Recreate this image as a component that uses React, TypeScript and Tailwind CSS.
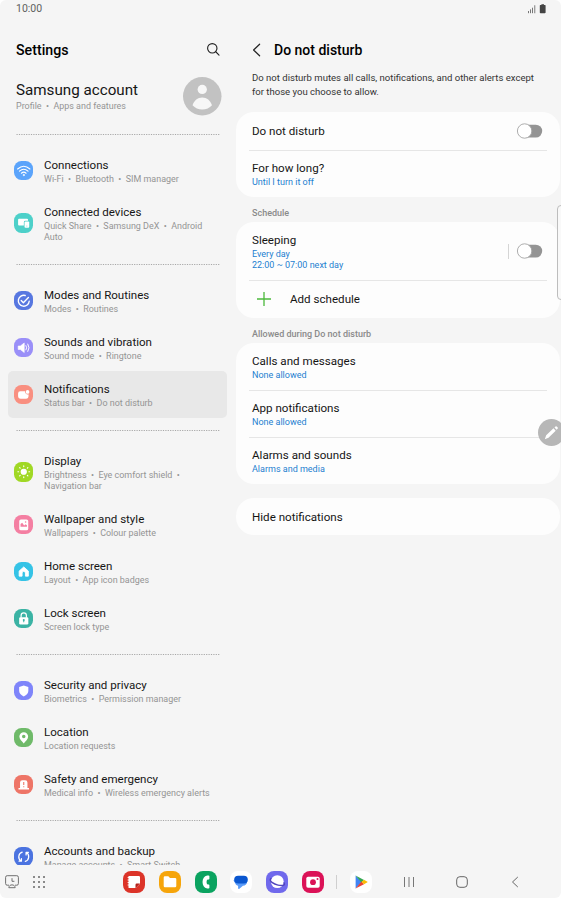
import type { ReactNode } from 'react';
import { clsx } from 'clsx';

interface MenuItem {
  title: string;
  lines: string[];
  color: string;
  icon: ReactNode;
  selected?: boolean;
}

const menuGroups: MenuItem[][] = [
  [
    {
      title: 'Connections',
      lines: ['Wi-Fi  •  Bluetooth  •  SIM manager'],
      color: 'bg-[#5ba4fb]',
      icon: (
        <g fill="none" stroke="#fff" strokeWidth="1.2" strokeLinecap="round">
          <path d="M3.7 8.2Q10 2.6 16.3 8.2" />
          <path d="M5.6 10.4Q10 6.5 14.4 10.4" />
          <path d="M7.6 12.5Q10 10.5 12.4 12.5" />
          <circle cx="10" cy="14.4" r=".7" fill="#fff" strokeWidth=".6" />
        </g>
      ),
    },
    {
      title: 'Connected devices',
      lines: ['Quick Share  •  Samsung DeX  •  Android', 'Auto'],
      color: 'bg-[#4dd0c9]',
      icon: (
        <g fill="#fff">
          <path d="M5.2 5.8h8.2a1 1 0 0 1 1 1v1.1h-2.8a1.5 1.5 0 0 0-1.5 1.5v3.3H5.2a1 1 0 0 1-1-1V6.8a1 1 0 0 1 1-1z" />
          <rect x="10.8" y="8.7" width="4.8" height="6.3" rx="1" />
          <circle cx="13.2" cy="13.3" r=".5" fill="#4dd0c9" />
        </g>
      ),
    },
  ],
  [
    {
      title: 'Modes and Routines',
      lines: ['Modes  •  Routines'],
      color: 'bg-[#5777e0]',
      icon: (
        <g fill="none" stroke="#fff" strokeWidth="1.4" strokeLinecap="round" strokeLinejoin="round">
          <path d="M11.5 4.6A5.6 5.6 0 1 0 15.6 10.5" />
          <path d="M7.4 9.8l2.2 2.2 5.2-5.4" />
        </g>
      ),
    },
    {
      title: 'Sounds and vibration',
      lines: ['Sound mode  •  Ringtone'],
      color: 'bg-[#9a8ff8]',
      icon: (
        <g>
          <path d="M4.3 8.2h2.2l4-3.1v9.8l-4-3.1H4.3z" fill="#fff" stroke="#fff" strokeWidth=".6" strokeLinejoin="round" />
          <path d="M12.3 7.8q1.5 2.2 0 4.4M14.2 6.2q2.6 3.8 0 7.6" fill="none" stroke="#fff" strokeLinecap="round" />
        </g>
      ),
    },
    {
      title: 'Notifications',
      lines: ['Status bar  •  Do not disturb'],
      color: 'bg-[#f98f80]',
      selected: true,
      icon: (
        <g fill="#fff">
          <path d="M6.4 6.5h4.9a2.7 2.7 0 0 0 3.6 3v1.9a2.6 2.6 0 0 1-2.6 2.6H6.8a2.6 2.6 0 0 1-2.6-2.6V8.8a2.3 2.3 0 0 1 2.2-2.3z" />
          <circle cx="13.9" cy="7.1" r="1.9" />
        </g>
      ),
    },
  ],
  [
    {
      title: 'Display',
      lines: ['Brightness  •  Eye comfort shield  •', 'Navigation bar'],
      color: 'bg-[#a0d825]',
      icon: (
        <g stroke="#fff" strokeWidth="1.2" strokeLinecap="round">
          <circle cx="10" cy="10" r="2.6" fill="#fff" />
          <path d="M10 4v.7M10 15.3v.7M4 10h.7M15.3 10h.7M5.8 5.8l.5.5M13.7 13.7l.5.5M14.2 5.8l-.5.5M6.3 13.7l-.5.5" />
        </g>
      ),
    },
    {
      title: 'Wallpaper and style',
      lines: ['Wallpapers  •  Colour palette'],
      color: 'bg-[#f47fa2]',
      icon: (
        <g>
          <rect x="5.4" y="4.5" width="9.2" height="11.2" rx="1.7" fill="#fff" />
          <path d="M6.7 12V9.3l1.7-1.3 2 2.7 1.5-1.3 1.4 1.2V12z" fill="#f47fa2" />
          <circle cx="11.9" cy="7.2" r=".8" fill="#f47fa2" />
        </g>
      ),
    },
    {
      title: 'Home screen',
      lines: ['Layout  •  App icon badges'],
      color: 'bg-[#35c3e6]',
      icon: (
        <path
          d="M10 5.1l4.7 4.2v5.2h-3v-3.2a1.7 1.7 0 0 0-3.4 0v3.2h-3V9.3z"
          fill="#fff" stroke="#fff" strokeWidth=".9" strokeLinejoin="round"
        />
      ),
    },
    {
      title: 'Lock screen',
      lines: ['Screen lock type'],
      color: 'bg-[#3bb3a4]',
      icon: (
        <g>
          <path d="M7.3 9V6.7a2.7 2.7 0 0 1 5.4 0V9" fill="none" stroke="#fff" strokeWidth="1.2" />
          <rect x="5.3" y="8.5" width="9.4" height="7.3" rx="1.3" fill="#fff" />
          <path d="M10 11v2.6" stroke="#3bb3a4" strokeWidth="1" />
          <circle cx="10" cy="11.2" r="1" fill="#3bb3a4" />
        </g>
      ),
    },
  ],
  [
    {
      title: 'Security and privacy',
      lines: ['Biometrics  •  Permission manager'],
      color: 'bg-[#7f85fa]',
      icon: <path d="M10 4.5l4.7 1.6v4c0 2.5-1.7 4.3-4.7 5.7-3-1.4-4.7-3.2-4.7-5.7v-4z" fill="#fff" />,
    },
    {
      title: 'Location',
      lines: ['Location requests'],
      color: 'bg-[#6fba69]',
      icon: (
        <path
          d="M10 4.3a4.5 4.5 0 0 0-4.5 4.5c0 3.1 2.7 5 4.5 7 1.8-2 4.5-3.9 4.5-7A4.5 4.5 0 0 0 10 4.3zm0 2.7a1.8 1.8 0 1 1 0 3.6A1.8 1.8 0 0 1 10 7z"
          fill="#fff" fillRule="evenodd"
        />
      ),
    },
    {
      title: 'Safety and emergency',
      lines: ['Medical info  •  Wireless emergency alerts'],
      color: 'bg-[#ee7567]',
      icon: (
        <g>
          <path d="M6.2 13.4V7.7a2.4 2.4 0 0 1 2.4-2.4h2.8a2.4 2.4 0 0 1 2.4 2.4v5.7h1.6v1.4H4.6v-1.4z" fill="#fff" />
          <path d="M10 7.3v3M10 11.5v1" stroke="#ee7567" strokeWidth="1.1" />
        </g>
      ),
    },
  ],
  [
    {
      title: 'Accounts and backup',
      lines: ['Manage accounts  •  Smart Switch'],
      color: 'bg-[#4b73e0]',
      icon: (
        <g fill="none" stroke="#fff" strokeWidth="1.3" strokeLinecap="round" strokeLinejoin="round">
          <path d="M8.4 5.3C4.2 6.6 3.8 12.2 7.2 14.3M7.6 11.9v2.6H5.2" />
          <path d="M11.6 14.7c4.2-1.3 4.6-6.9 1.2-9M12.4 8.1V5.5h2.4" />
        </g>
      ),
    },
  ],
];

function DottedLine() {
  return (
    <div className="flex h-[25px] items-center px-[16px]">
      <svg className="h-px w-[204px]">
        <line x1="0.5" y1="0.5" x2="204" y2="0.5" stroke="#a8a8a8" strokeWidth="1" strokeDasharray="1.2 1.2" />
      </svg>
    </div>
  );
}

function MenuRow({ item }: { item: MenuItem }) {
  return (
    <div
      className={clsx(
        'ml-[8px] flex w-[219px] shrink-0 items-center rounded-[5px] pl-[5.5px]',
        item.lines.length > 1 ? 'h-[58px]' : 'h-[47px]',
        item.selected && 'bg-[#e8e8e8]'
      )}
    >
      <div className={clsx('h-[19.5px] w-[19.5px] shrink-0 rounded-[7.5px]', item.color)}>
        <svg viewBox="0 0 20 20" className="h-full w-full">{item.icon}</svg>
      </div>
      <div className="ml-[11px] whitespace-pre">
        <div className="text-[11.55px] leading-[17px] text-[#151515]">{item.title}</div>
        {item.lines.map((line) => (
          <div key={line} className="text-[8.95px] leading-[10.5px] text-[#949494]">{line}</div>
        ))}
      </div>
    </div>
  );
}

function Sidebar() {
  return (
    <div className="flex w-[236px] shrink-0 flex-col overflow-hidden">
      <div className="flex h-[33px] shrink-0 items-center justify-between pr-[15px] pl-[16px]">
        <h1 className="pt-[2px] text-[14.2px] leading-none font-medium text-black">Settings</h1>
        <svg viewBox="0 0 16 16" className="h-[15px] w-[15px]" fill="none" stroke="#222" strokeWidth="1.2" strokeLinecap="round">
          <circle cx="6.7" cy="6.7" r="5" />
          <path d="M10.4 10.4l3.5 3.5" />
        </svg>
      </div>
      <div className="flex h-[56px] shrink-0 items-center justify-between pt-[5px] pr-[14.5px] pl-[16px]">
        <div className="pt-[1px] whitespace-pre">
          <div className="text-[15.2px] leading-[19px] text-[#151515]">Samsung account</div>
          <div className="text-[8.95px] leading-[13px] text-[#949494]">Profile  •  Apps and features</div>
        </div>
        <svg viewBox="0 0 38 38" className="h-[38.5px] w-[38.5px]">
          <circle cx="19" cy="19" r="19" fill="#c2c2c2" />
          <circle cx="19" cy="12.3" r="4.6" fill="#f7f7f7" />
          <path d="M9.4 27.8c1.7-4.6 5-7.5 9.6-7.5s7.9 2.9 9.6 7.5c-2.4 2.7-5.7 4.3-9.6 4.3s-7.2-1.6-9.6-4.3z" fill="#f7f7f7" />
        </svg>
      </div>
      {menuGroups.map((group) => (
        <div key={group[0].title} className="shrink-0">
          <DottedLine />
          {group.map((item) => (
            <MenuRow key={item.title} item={item} />
          ))}
        </div>
      ))}
    </div>
  );
}

function Toggle() {
  return (
    <svg viewBox="0 0 27 16" className="h-[16px] w-[27px] shrink-0">
      <rect x="4" y="1.7" width="22.2" height="12.8" rx="6.4" fill="#949494" />
      <circle cx="8.6" cy="8" r="7.2" fill="#fff" stroke="#a5a5a5" strokeWidth=".9" />
    </svg>
  );
}

function Card({ className, children }: { className: string; children: ReactNode }) {
  return <div className={clsx('w-[324px] shrink-0 rounded-[18px] bg-[#fdfdfd]', className)}>{children}</div>;
}

function Divider() {
  return <div className="mx-[13px] h-px bg-[#e6e6e6]" />;
}

interface SettingProps {
  title: string;
  values?: string[];
  className: string;
  children?: ReactNode;
}

function Setting({ title, values = [], className, children }: SettingProps) {
  return (
    <div className={clsx('flex items-center justify-between pr-[17px] pl-[16px]', className)}>
      <div>
        <div className="text-[11.6px] leading-[17px] text-[#151515]">{title}</div>
        {values.map((value) => (
          <div key={value} className="text-[9px] leading-[10.5px] text-[#1d7fd0]">{value}</div>
        ))}
      </div>
      {children}
    </div>
  );
}

function SectionLabel({ text }: { text: string }) {
  return (
    <div className="flex h-[25px] shrink-0 items-center pt-[8px] pl-[16px] text-[9px] leading-[11px] font-medium text-[#8a8a8a]">
      {text}
    </div>
  );
}

function DetailPane() {
  return (
    <div className="w-[325px] overflow-hidden">
      <div className="flex h-[33px] items-center pl-[16px]">
        <svg viewBox="0 0 10 14" className="h-[14px] w-[10px]" fill="none" stroke="#222" strokeWidth="1.2" strokeLinecap="round" strokeLinejoin="round">
          <path d="M7.6 1.2L1.6 7l6 5.8" />
        </svg>
        <h2 className="ml-[12px] text-[14px] leading-none font-medium text-black">Do not disturb</h2>
      </div>
      <p className="h-[46px] pt-[5px] pl-[16px] text-[9.55px] leading-[14px] whitespace-pre text-[#333]">
        {'Do not disturb mutes all calls, notifications, and other alerts except\nfor those you choose to allow.'}
      </p>
      <Card className="h-[85px]">
        <Setting title="Do not disturb" className="h-[38px]"><Toggle /></Setting>
        <Divider />
        <Setting title="For how long?" values={['Until I turn it off']} className="h-[46px]" />
      </Card>
      <SectionLabel text="Schedule" />
      <Card className="h-[96px]">
        <Setting title="Sleeping" values={['Every day', '22:00 ~ 07:00 next day']} className="h-[58px]">
          <div className="flex items-center gap-[7px]">
            <div className="h-[15px] w-px bg-[#d5d5d5]" />
            <Toggle />
          </div>
        </Setting>
        <Divider />
        <div className="flex h-[37px] items-center pl-[21px] text-[11.6px] text-[#151515]">
          <svg viewBox="0 0 14 14" className="mb-[1px] h-[14px] w-[14px]" stroke="#4cb93c" strokeWidth="1.3">
            <path d="M7 0v14M0 7h14" />
          </svg>
          <span className="ml-[19px]">Add schedule</span>
        </div>
      </Card>
      <SectionLabel text="Allowed during Do not disturb" />
      <Card className="h-[141px]">
        <Setting title="Calls and messages" values={['None allowed']} className="h-[47px]" />
        <Divider />
        <Setting title="App notifications" values={['None allowed']} className="h-[46px]" />
        <Divider />
        <Setting title="Alarms and sounds" values={['Alarms and media']} className="h-[46px]" />
      </Card>
      <Card className="mt-[14px] h-[37px]">
        <Setting title="Hide notifications" className="h-[38px]" />
      </Card>
    </div>
  );
}

function DockIcon({ color, children }: { color: string; children: ReactNode }) {
  return (
    <div className={clsx('h-[22px] w-[22px] rounded-[8px]', color)}>
      <svg viewBox="0 0 22 22" className="h-full w-full">{children}</svg>
    </div>
  );
}

function Taskbar() {
  return (
    <div className="flex h-[33px] shrink-0 items-center pt-[1px]">
      <svg viewBox="0 0 14 14" className="ml-[5px] h-[14px] w-[14px]" fill="none" stroke="#707070">
        <path d="M4 10.2H2.2A1.6 1.6 0 0 1 .6 8.6V2.3A1.6 1.6 0 0 1 2.2.7h9.6a1.6 1.6 0 0 1 1.6 1.6v6.3a1.6 1.6 0 0 1-1.6 1.6H10" />
        <path d="M7 3.2v3.1h2.4M3.8 12.7c.3-2 1.5-2.8 3.2-2.8s2.9.8 3.2 2.8z" />
      </svg>
      <svg viewBox="0 0 12 12" className="ml-[14px] h-[12px] w-[12px]" fill="#666">
        {[1, 6, 11].map((y) => [1, 6, 11].map((x) => <circle key={`${x}-${y}`} cx={x} cy={y} r="1" />))}
      </svg>
      <div className="ml-[78px] flex gap-[13.8px]">
        <DockIcon color="bg-[#dc3429]">
          <path d="M5.5 5h10.3a1.2 1.2 0 0 1 1.2 1.2v6.6l-4.3 4.3H6.2a.7.7 0 0 1-.7-.7z" fill="#fff" />
          <path d="M17 12.6h-3.3a1.2 1.2 0 0 0-1.2 1.2v3.4z" fill="#b3231c" />
          <path d="M4.6 6.5h1.5M4.6 9h1.5M4.6 11.5h1.5M4.6 14h1.5" stroke="#fff" strokeWidth=".9" />
        </DockIcon>
        <DockIcon color="bg-[#f6a50b]">
          <path d="M4.7 6.5a1.2 1.2 0 0 1 1.2-1.2h3.4l1.7 1.6h5.1a1.2 1.2 0 0 1 1.2 1.2v7a1.2 1.2 0 0 1-1.2 1.2H5.9a1.2 1.2 0 0 1-1.2-1.2z" fill="#fff" />
        </DockIcon>
        <DockIcon color="bg-[#0ba360]">
          <path
            d="M13.6 4.5h-1.4C6 5.2 6 16.8 12.200 17.500h1.400q.8 0 .8-.8v-2.400q0-.7-.7-.8l-1.700-.2q-1-2.300 0-4.600l1.700-.2q.7-.1.7-.8V5.300q0-.8-.8-.8z"
            fill="#fff"
          />
        </DockIcon>
        <DockIcon color="bg-white">
          <path d="M3.3 9.2h13.9v1.2a4.3 4.3 0 0 1-4.3 4.3l-3.500 3c-.7.5-1.300.2-1.300-.5v-2.500C5.500 14.500 5 11 3.300 9.200z" fill="#5a9bf8" />
          <rect x="4.200" y="4.700" width="13.600" height="7.800" rx="3.900" fill="#0b57d0" />
        </DockIcon>
        <DockIcon color="bg-[#7069ec]">
          <circle cx="11.3" cy="10.6" r="6.4" fill="#fff" />
          <path d="M4.9 7.5C2.3 9.8 8 13.3 12 14.1c4.5 1 7.5.3 6.100-2.200" fill="none" stroke="#5146bd" strokeWidth="1.4" strokeLinecap="round" />
        </DockIcon>
        <DockIcon color="bg-[#db1257]">
          <rect x="4.3" y="5.7" width="13.4" height="11" rx="1.7" fill="#fff" />
          <circle cx="11" cy="11.2" r="2.9" fill="#db1257" />
          <circle cx="15.5" cy="8" r="1" fill="#db1257" />
        </DockIcon>
      </div>
      <div className="ml-[12px] h-[14px] w-px bg-[#cfcfcf]" />
      <div className="ml-[13px]">
        <DockIcon color="bg-white">
          <path d="M5.6 4.5v13L12 11z" fill="#4285f4" />
          <path d="M5.6 4.5L14 9l-2.6 2.5z" fill="#34a853" />
          <path d="M5.6 17.6L14 13.2 11.4 10.6z" fill="#ea4335" />
          <path d="M14 8.8l3.8 2.3L14 13.3 11.5 11z" fill="#fbbc04" />
        </DockIcon>
      </div>
      <svg viewBox="0 0 12 12" className="ml-[31px] h-[12px] w-[12px]" stroke="#777">
        <path d="M1.5 1v10M6 1v10M10.5 1v10" />
      </svg>
      <svg viewBox="0 0 12 12" className="ml-[41px] h-[12px] w-[12px]" fill="none" stroke="#666">
        <rect x=".7" y=".7" width="10.6" height="10.6" rx="3.2" />
      </svg>
      <svg viewBox="0 0 8 12" className="ml-[43px] h-[12px] w-[8px]" fill="none" stroke="#666" strokeLinejoin="round">
        <path d="M6.8 1L1.5 6l5.3 5" />
      </svg>
    </div>
  );
}

function StatusBar() {
  return (
    <div className="flex h-[17px] shrink-0 items-center justify-between pr-[15px] pl-[16px]">
      <span className="pt-[1px] text-[10.5px] leading-none text-[#606060]">10:00</span>
      <svg viewBox="0 0 18 10" className="h-[10px] w-[18px]">
        <path d="M.5 7v2.2M2.5 5.4v3.8M4.5 3.7v5.5" stroke="#777" />
        <path d="M6.7 1.2v8" stroke="#999" strokeWidth="1.3" />
        <path d="M12.4.9h1V.2H16v.7h1a.6.6 0 0 1 .6.6v7a.8.8 0 0 1-.8.8h-4.200a.8.8 0 0 1-.8-.8v-7a.6.6 0 0 1 .6-.6z" fill="#444" />
      </svg>
    </div>
  );
}

export default function App() {
  return (
    <div className="h-[898px] w-[561px] overflow-hidden bg-white">
      <div className="relative flex h-full flex-col overflow-hidden rounded-[6px] bg-[#f5f5f5] font-['Roboto',sans-serif]">
        <StatusBar />
        <div className="flex h-[848px] shrink-0 overflow-hidden pt-[16px]">
          <Sidebar />
          <DetailPane />
        </div>
        <Taskbar />
        {/* edge panel handle */}
        <div className="absolute top-[205px] left-[557px] h-[95px] w-[10px] rounded-[4px] border border-[#bdbdbd] bg-[#f9f9f9]" />
        {/* floating pen button */}
        <div className="absolute top-[419px] left-[538px] h-[27px] w-[27px] rounded-full bg-[#b7b7b7]">
          <svg viewBox="0 0 27 27" className="h-full w-full" fill="#fff">
            <path d="M6.8 20.3l1.4-4 7.3-7 2.2 2.4-7.2 7.1zM16.5 8.4l1-1q.6-.5 1.2.1l1 1q.5.6-.1 1.2l-1 1z" />
          </svg>
        </div>
      </div>
    </div>
  );
}
